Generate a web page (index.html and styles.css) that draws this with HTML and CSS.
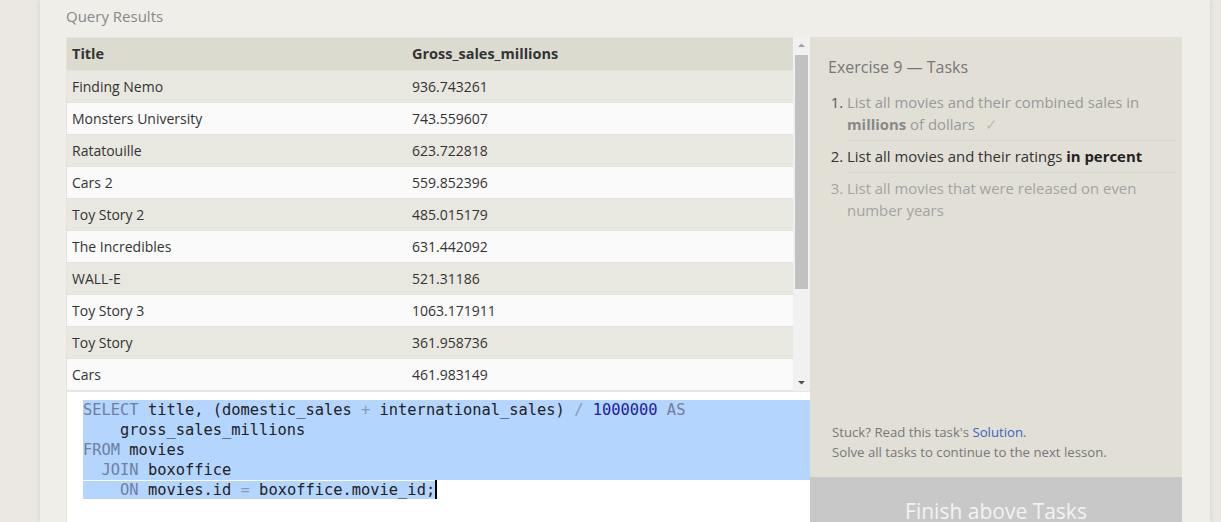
FILE: index.html
```html
<!DOCTYPE html>
<html lang="en">
<head>
<meta charset="utf-8">
<title>Query Results</title>
<link rel="stylesheet" href="styles.css">
</head>
<body>
<div class="page">
  <main class="card">
    <h2 class="section-title">Query Results</h2>
    <div class="workspace">
      <div class="left">
        <div class="results">
          <div class="table-wrap">
            <table class="results-table">
              <thead>
                <tr><th class="col-title">Title</th><th>Gross_sales_millions</th></tr>
              </thead>
              <tbody>
                <tr><td>Finding Nemo</td><td>936.743261</td></tr>
                <tr><td>Monsters University</td><td>743.559607</td></tr>
                <tr><td>Ratatouille</td><td>623.722818</td></tr>
                <tr><td>Cars 2</td><td>559.852396</td></tr>
                <tr><td>Toy Story 2</td><td>485.015179</td></tr>
                <tr><td>The Incredibles</td><td>631.442092</td></tr>
                <tr><td>WALL-E</td><td>521.31186</td></tr>
                <tr><td>Toy Story 3</td><td>1063.171911</td></tr>
                <tr><td>Toy Story</td><td>361.958736</td></tr>
                <tr><td>Cars</td><td>461.983149</td></tr>
                <tr><td>Up</td><td>731.342744</td></tr>
                <tr><td>Monsters, Inc.</td><td>562.816256</td></tr>
                <tr><td>Brave</td><td>538.983207</td></tr>
                <tr><td>A Bug's Life</td><td>363.398565</td></tr>
              </tbody>
            </table>
          </div>
          <div class="scrollbar">
            <div class="sb-btn">
              <svg width="17" height="17" viewBox="0 0 17 17"><path d="M5 10 L8.5 6.5 L12 10 Z" fill="#a3a3a3"/></svg>
            </div>
            <div class="sb-track"><div class="sb-thumb"></div></div>
            <div class="sb-btn">
              <svg width="17" height="17" viewBox="0 0 17 17"><path d="M5 7 L12 7 L8.5 10.5 Z" fill="#505050"/></svg>
            </div>
          </div>
        </div>
        <div class="editor">
          <div class="code">
<div class="line sel"><span class="kw">SELECT</span> title, (domestic_sales <span class="op">+</span> international_sales) <span class="op">/</span> <span class="num">1000000</span> <span class="kw">AS</span></div>
<div class="line sel">    gross_sales_millions</div>
<div class="line sel"><span class="kw">FROM</span> movies</div>
<div class="line sel">  <span class="kw">JOIN</span> boxoffice</div>
<div class="line"><span class="sel-inline">    <span class="kw">ON</span> movies.id <span class="op">=</span> boxoffice.movie_id;</span><span class="caret"></span></div>
          </div>
          <div class="editor-footer"><span class="reset">RESET</span></div>
        </div>
      </div>
      <aside class="right">
        <div class="tasks-panel">
          <h3 class="tasks-title">Exercise 9 — Tasks</h3>
          <ol class="tasks">
            <li class="done">List all movies and their combined sales in <b>millions</b> of dollars <span class="check">✓</span></li>
            <li class="current">List all movies and their ratings <b>in percent</b></li>
            <li class="todo">List all movies that were released on even number years</li>
          </ol>
          <div class="hint">
            <p>Stuck? Read this task's <a class="link">Solution</a>.</p>
            <p>Solve all tasks to continue to the next lesson.</p>
          </div>
        </div>
        <div class="finish-btn">Finish above Tasks</div>
      </aside>
    </div>
  </main>
</div>
</body>
</html>
```

FILE: styles.css
```css
* { box-sizing: border-box; }

html, body {
  margin: 0;
  padding: 0;
  height: 522px;
  overflow: hidden;
  background: #ebe8e3;
  font-family: "Open Sans", "Noto Sans", sans-serif;
  color: #333;
}

.page {
  display: flex;
  padding: 0 11px 0 40px;
  height: 522px;
}

.card {
  flex: 1;
  background: #f0eee8;
  padding: 0 28px 0 26px;
  box-shadow: 0 0 6px rgba(0, 0, 0, 0.09);
}

.section-title {
  margin: 0;
  padding-top: 4px;
  height: 37px;
  font-size: 15px;
  line-height: 24px;
  font-weight: 400;
  color: #888;
}

.workspace {
  display: flex;
  height: 510px;
}

.left {
  width: 744px;
  display: flex;
  flex-direction: column;
  border-left: 1px solid #e4e2da;
}

.results {
  display: flex;
  height: 354px;
}

.table-wrap {
  flex: 1;
  overflow: hidden;
  background: #fafafa;
  border-top: 1px solid #e8e6df;
}

.results-table {
  width: 100%;
  border-collapse: collapse;
  font-size: 14px;
}

.results-table th,
.results-table td {
  height: 32px;
  padding: 0 5px;
  text-align: left;
  vertical-align: middle;
}

.results-table th {
  background: #dcdbd0;
  font-weight: 700;
  color: #333;
  font-size: 14.5px;
}

.results-table .col-title { width: 340px; }

.results-table td {
  border-top: 1px solid #e3e2db;
  color: #333;
}

.results-table tbody tr:nth-child(odd) td { background: #e9e8e0; }
.results-table tbody tr:nth-child(even) td { background: #fafafa; }

.scrollbar {
  width: 17px;
  display: flex;
  flex-direction: column;
  background: #f1f1f1;
}

.sb-btn {
  height: 17px;
  display: flex;
}

.sb-track {
  flex: 1;
  padding: 1px 2px 0;
}

.sb-thumb {
  height: 234px;
  background: #c1c1c1;
}

.editor {
  flex: 1;
  background: #fff;
  border-top: 1px solid #e6e6e6;
  display: flex;
  flex-direction: column;
  padding: 8px 0 0 16px;
}

.code {
  font-family: "DejaVu Sans Mono", "Liberation Mono", monospace;
  font-size: 15.4px;
  line-height: 20px;
  color: #222;
}

.line {
  height: 20px;
  white-space: pre;
}

.sel { background: #b4d5fe; }
.sel-inline { background: #b4d5fe; }

.caret {
  display: inline-block;
  width: 2px;
  height: 19px;
  background: #000;
  vertical-align: top;
}

.kw { color: #6f7f9f; }
.op { color: #8a99b4; }
.num { color: #1d1da4; }

.editor-footer {
  margin-top: 13px;
  text-align: right;
  padding-right: 10px;
}

.reset {
  font-size: 11px;
  letter-spacing: 1px;
  color: #c4c4c4;
  line-height: 14px;
}

.right {
  width: 372px;
  display: flex;
  flex-direction: column;
}

.tasks-panel {
  flex: 1;
  background: #e2e0d6;
  padding: 19px 6px 15px 18px;
  display: flex;
  flex-direction: column;
}

.tasks-title {
  margin: 0 0 9px;
  font-size: 16px;
  line-height: 22px;
  font-weight: 400;
  color: #777;
}

.tasks {
  margin: 0;
  padding-left: 19px;
  font-size: 14.9px;
  line-height: 22px;
}

.tasks li {
  padding: 4px 0 5px;
  border-bottom: 1px solid #d8d6cc;
}

.tasks li:last-child { border-bottom: none; }

.tasks li.done { color: #999; }
.tasks li.done::marker { color: #555; }
.tasks li.done b { color: #888; }
.tasks li.current { color: #333; }
.tasks li.current b { color: #222; }
.tasks li.todo { color: #a3a3a0; }

.check {
  color: #b1c2a4;
  margin-left: 6px;
}

.hint {
  margin-top: auto;
  padding-left: 4px;
  font-size: 13.2px;
  line-height: 20px;
  color: #777;
}

.hint p { margin: 0; }

.link { color: #3d5fc4; }

.finish-btn {
  height: 70px;
  background: #c8c8c8;
  color: #f3f3f3;
  font-size: 21px;
  text-align: center;
  padding-top: 19px;
  line-height: 30px;
}
```
